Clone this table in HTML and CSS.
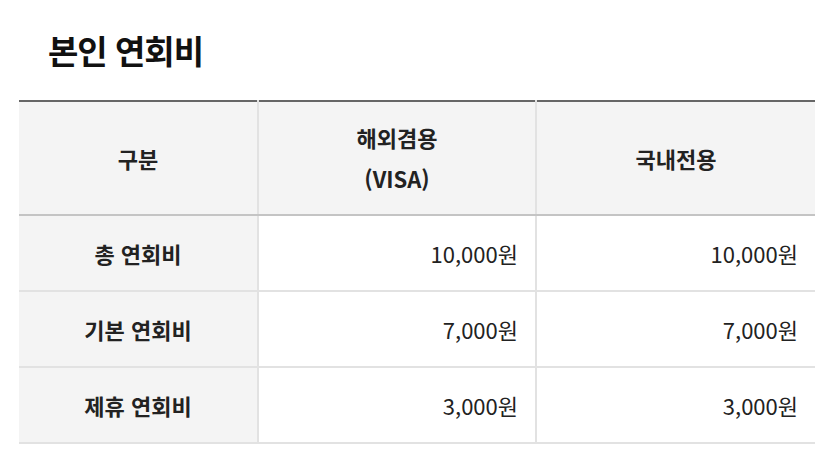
FILE: index.html
```html
<!DOCTYPE html>
<html lang="ko">
<head>
<meta charset="utf-8">
<link rel="stylesheet" href="styles.css">
</head>
<body>
<div class="page">
  <h2 class="title">본인 연회비</h2>
  <table class="fee">
    <colgroup>
      <col class="c1"><col class="c2"><col class="c3">
    </colgroup>
    <thead>
      <tr>
        <th>구분</th>
        <th>해외겸용<br>(VISA)</th>
        <th>국내전용</th>
      </tr>
    </thead>
    <tbody>
      <tr>
        <th>총 연회비</th>
        <td>10,000원</td>
        <td>10,000원</td>
      </tr>
      <tr>
        <th>기본 연회비</th>
        <td>7,000원</td>
        <td>7,000원</td>
      </tr>
      <tr>
        <th>제휴 연회비</th>
        <td>3,000원</td>
        <td>3,000원</td>
      </tr>
    </tbody>
  </table>
</div>
</body>
</html>
```
FILE: styles.css
```css
html, body {
  margin: 0;
  padding: 0;
  background: #fff;
}
body {
  font-family: "Noto Sans CJK KR", "Noto Sans", sans-serif;
  color: #222;
}
.page {
  padding: 0 21px 0 19px;
}
.title {
  margin: 0;
  padding: 27px 0 0 29px;
  height: 100px;
  box-sizing: border-box;
  font-size: 33px;
  line-height: 46px;
  font-weight: 700;
  color: #111;
  letter-spacing: -1px;
}
.fee {
  width: 796px;
  border-collapse: collapse;
  table-layout: fixed;
}
.c1 { width: 239px; }
.c2 { width: 278px; }
.c3 { width: 279px; }
.fee th, .fee td {
  border: 2px solid #e2e2e2;
  font-size: 22px;
}
.fee tr > :first-child { border-left: none; }
.fee tr > :last-child { border-right: none; }
.fee thead th {
  border-top: 2px solid #666;
  border-bottom: 2px solid #c4c4c4;
  background: #f4f4f4;
  height: 112px;
  padding: 0;
  font-weight: 700;
  font-size: 22px;
  line-height: 41px;
  color: #222;
  text-align: center;
}
.fee tbody th {
  background: #f4f4f4;
  height: 74px;
  padding: 0;
  font-weight: 700;
  text-align: center;
  color: #222;
}
.fee tbody td {
  height: 74px;
  padding: 0 17px 0 0;
  text-align: right;
  font-weight: 400;
  color: #222;
}
```
